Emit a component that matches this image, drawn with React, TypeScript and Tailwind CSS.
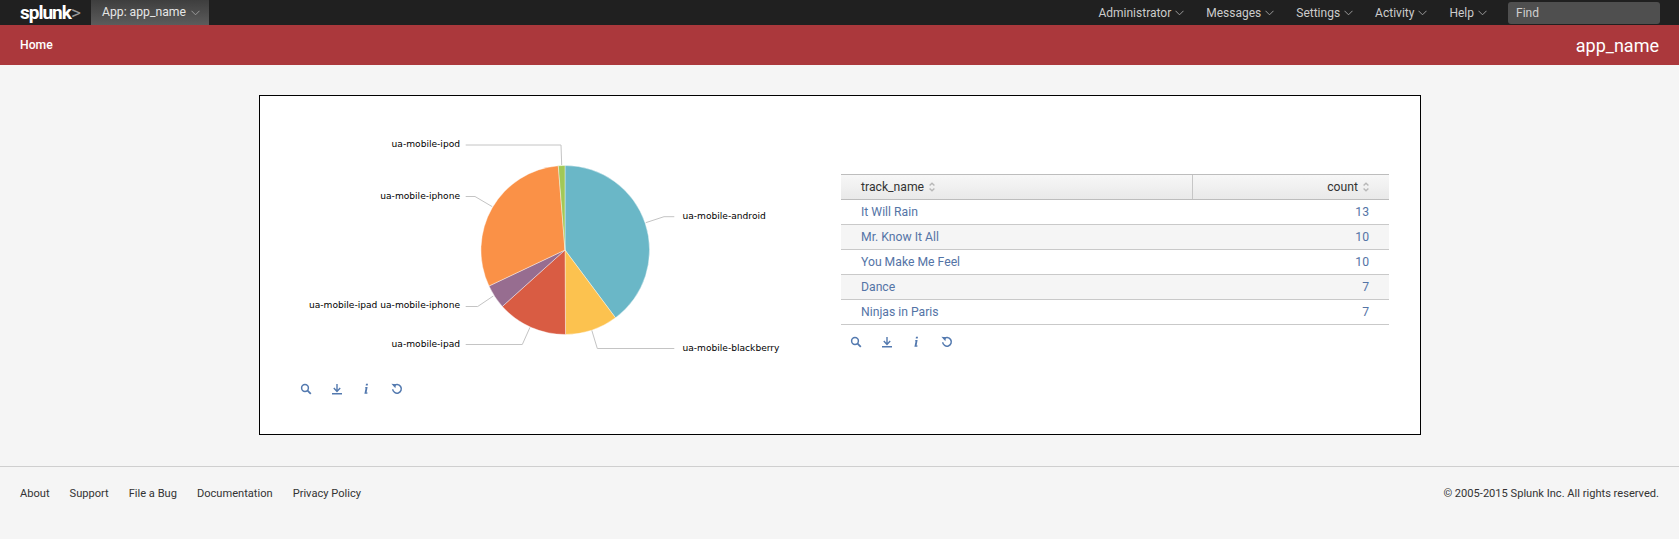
import { ReactNode } from "react";

const navItems = ["Administrator", "Messages", "Settings", "Activity", "Help"];
const footerLinks = ["About", "Support", "File a Bug", "Documentation", "Privacy Policy"];
const rows = [
  { name: "It Will Rain", count: 13 },
  { name: "Mr. Know It All", count: 10 },
  { name: "You Make Me Feel", count: 10 },
  { name: "Dance", count: 7 },
  { name: "Ninjas in Paris", count: 7 },
];

const cx = 565;
const cy = 250;
const r = 84.5;

// end points were read off the screenshot, so no angle maths here
const slices = [
  { fill: "#6ab7c7", from: [565, 165.5], to: [615.5, 317.8] },
  { fill: "#fcc24f", from: [615.5, 317.8], to: [565.5, 334.5] },
  { fill: "#d95c43", from: [565.5, 334.5], to: [502.3, 306.5] },
  { fill: "#976d90", from: [502.3, 306.5], to: [489, 286] },
  { fill: "#fa9147", from: [489, 286], to: [558.3, 165.8] },
  { fill: "#a2c857", from: [558.3, 165.8], to: [565, 165.5] },
];

const leaders = [
  "465.7,145 561,145 561.7,165",
  "465.7,196.5 475,196.5 492.3,206.7",
  "645.7,222.7 664,216.7 674.3,216.7",
  "465.7,306.5 477.7,306.5 493.3,296",
  "465.7,344.5 522.3,344.5 530,327.3",
  "591.7,330 597.3,348.5 674.3,348.5",
];

const labels = [
  { text: "ua-mobile-ipod", x: 460, y: 147, anchor: "end" },
  { text: "ua-mobile-iphone", x: 460, y: 199, anchor: "end" },
  { text: "ua-mobile-ipad ua-mobile-iphone", x: 460, y: 308, anchor: "end" },
  { text: "ua-mobile-ipad", x: 460, y: 347, anchor: "end" },
  { text: "ua-mobile-android", x: 682.5, y: 219, anchor: "start" },
  { text: "ua-mobile-blackberry", x: 682.5, y: 351, anchor: "start" },
];

function Chevron({ className }: { className?: string }) {
  return (
    <svg width="9" height="6" viewBox="0 0 9 6" fill="none" className={className}>
      <path d="M0.5 0.8 L4.5 4.8 L8.5 0.8" stroke="currentColor" strokeWidth="1" />
    </svg>
  );
}

function SortIcon() {
  return (
    <svg width="6" height="10" viewBox="0 0 6 10" fill="none" className="text-[#b8b8b8]">
      <path d="M0.6 3.6 L3 1.2 L5.4 3.6 M0.6 6.4 L3 8.8 L5.4 6.4" stroke="currentColor" strokeWidth="1.4" />
    </svg>
  );
}

function ActionIcons() {
  return (
    <div className="flex items-center gap-[19px] text-[#5379af]">
      <svg width="12" height="12" viewBox="0 0 12 12" fill="none">
        <circle cx="5" cy="5" r="3.4" stroke="currentColor" strokeWidth="1.5" />
        <path d="M7.6 7.6 L10.8 10.8" stroke="currentColor" strokeWidth="1.8" />
      </svg>
      <svg width="12" height="12" viewBox="0 0 12 12" fill="none">
        <path d="M6 1 V7.5 M2.8 5 L6 8.4 L9.2 5 M1 10.7 H11" stroke="currentColor" strokeWidth="1.4" />
      </svg>
      <svg width="8" height="12" viewBox="-1 0 8 12" fill="currentColor">
        <path d="M3 0.8 H5 L4.7 2.6 H2.7 Z M2.5 4 H4.6 L3.6 9.4 L4.6 9.4 L4.3 10.8 H1.4 L2.6 5.3 H1.9 Z" />
      </svg>
      <svg width="12" height="12" viewBox="0 0 12 12" fill="none" className="ml-[2px]">
        <path d="M2.8 3 A4.3 4.3 0 1 1 1.7 6.2" stroke="currentColor" strokeWidth="1.5" />
        <path d="M0.4 0.8 L5 1.2 L4.4 5.2 Z" fill="currentColor" />
      </svg>
    </div>
  );
}

function PieChart() {
  return (
    <svg width="581" height="265" viewBox="260 96 581 265" className="block">
      {leaders.map((points) => (
        <polyline key={points} points={points} fill="none" stroke="#c4c4c4" strokeWidth="1" />
      ))}
      {slices.map((s) => (
        <path
          key={s.fill}
          d={`M${cx} ${cy} L${s.from[0]} ${s.from[1]} A${r} ${r} 0 0 1 ${s.to[0]} ${s.to[1]} Z`}
          fill={s.fill}
          stroke="#ffffff"
          strokeWidth="0.4"
        />
      ))}
      {labels.map((l) => (
        <text
          key={l.text}
          x={l.x}
          y={l.y}
          textAnchor={l.anchor as "start" | "end"}
          fill="#000000"
          className="text-[9.1px] font-['DejaVu_Sans',sans-serif]"
        >
          {l.text}
        </text>
      ))}
    </svg>
  );
}

function HeaderCell({ children, right }: { children: ReactNode; right?: boolean }) {
  return (
    <div
      className={
        right
          ? "flex flex-1 items-center justify-end gap-[5px] pr-[20px]"
          : "flex w-[352px] items-center gap-[5px] border-r border-[#c6c6c6] pl-[20px]"
      }
    >
      {children}
      <SortIcon />
    </div>
  );
}

function ResultsTable() {
  return (
    <div className="w-[548px]">
      <div className="flex h-[26px] border-y border-[#bdbdbd] bg-gradient-to-b from-[#f7f7f7] to-[#e9e9e9] text-[12.2px] text-[#333333]">
        <HeaderCell>track_name</HeaderCell>
        <HeaderCell right>count</HeaderCell>
      </div>
      {rows.map((row, i) => (
        <div
          key={row.name}
          className={`flex h-[25px] items-center justify-between border-b border-[#c9c9c9] px-[20px] text-[12.2px] text-[#5474a6] ${
            i % 2 === 1 ? "bg-[#f5f5f5]" : "bg-white"
          }`}
        >
          <span>{row.name}</span>
          <span>{row.count}</span>
        </div>
      ))}
      <div className="pl-[9px] pt-[11px]">
        <ActionIcons />
      </div>
    </div>
  );
}

export default function App() {
  return (
    <div className="flex h-[539px] flex-col bg-[#f5f5f5] font-['Roboto',sans-serif]">
      <nav className="flex h-[25px] items-center bg-[#202020] text-[12px] text-[#cccccc]">
        <div className="flex w-[91px] items-center pl-[20px] text-[19px] font-bold leading-none tracking-[-1px] text-white">
          splunk<span className="font-normal text-[#9a9a9a]">&gt;</span>
        </div>
        <div className="flex h-full w-[118px] items-center gap-[5px] bg-gradient-to-b from-[#3e3e3e] to-[#5c5c5c] pl-[11px] text-[12.2px] text-[#e6e6e6]">
          App: app_name <Chevron className="text-[#9a9a9a]" />
        </div>
        <div className="ml-auto mr-[19px] flex items-center gap-[22px]">
          {navItems.map((item) => (
            <div key={item} className="flex items-center gap-[4px]">
              {item} <Chevron className="text-[#9a9a9a]" />
            </div>
          ))}
          <div className="-ml-px flex h-[22px] w-[152px] items-center rounded-[3px] bg-[#4f4f4f] pl-[8px] text-[#d0d0d0]">
            Find
          </div>
        </div>
      </nav>

      <header className="flex h-[40px] items-center justify-between bg-[#ab383c] px-[20px] text-white">
        <span className="text-[12.2px] font-medium">Home</span>
        <span className="text-[18px]">app_name</span>
      </header>

      <main className="pl-[259px] pr-[258px] pt-[30px]">
        <section className="flex h-[340px] border border-black bg-white">
          <div className="w-[581px]">
            <PieChart />
            <div className="pl-[40px] pt-[22px]">
              <ActionIcons />
            </div>
          </div>
          <div className="pt-[78px]">
            <ResultsTable />
          </div>
        </section>
      </main>

      <footer className="mt-auto flex h-[73px] items-center justify-between border-t border-[#cfcfcf] px-[20px] pb-[18px] text-[11.1px] text-[#333333]">
        <div className="flex gap-[20px]">
          {footerLinks.map((link) => (
            <span key={link}>{link}</span>
          ))}
        </div>
        <span>© 2005-2015 Splunk Inc. All rights reserved.</span>
      </footer>
    </div>
  );
}
